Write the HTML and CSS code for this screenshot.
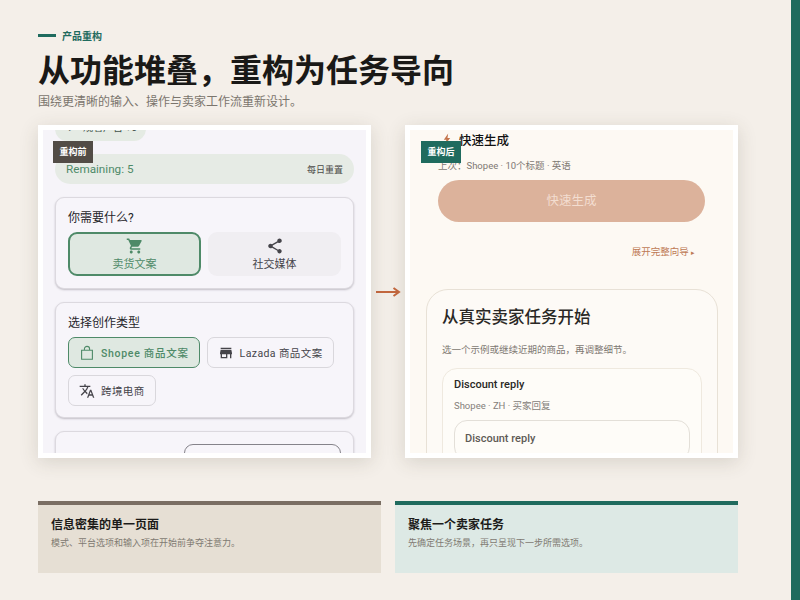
FILE: index.html
```html
<!DOCTYPE html>
<html lang="zh-CN">

<head>
    <meta charset="UTF-8">
    <meta name="viewport" content="width=device-width, initial-scale=1.0">
    <link rel="stylesheet" href="styles.css">
    <title>产品重构</title>
</head>

<body>
    <div class="page">
        <div class="main">
            <div class="eyebrow"><span class="eyebrow-line"></span><span>产品重构</span></div>
            <h1 class="title">从功能堆叠，重构为任务导向</h1>
            <p class="subtitle">围绕更清晰的输入、操作与卖家工作流重新设计。</p>

            <div class="compare">
                <div class="frame">
                    <div class="badge badge-before">重构前</div>
                    <div class="screen screen-before">
                        <div class="ad-chip"><span class="ad-play">▸</span><span>观看广告 +5</span></div>
                        <div class="remaining">
                            <span class="remaining-text">Remaining: 5</span>
                            <span class="remaining-note">每日重置</span>
                        </div>

                        <div class="card">
                            <div class="card-label">你需要什么?</div>
                            <div class="mode-row">
                                <div class="mode mode-on">
                                    <svg class="mode-icon" viewBox="0 0 24 24"><path d="M7 18c-1.1 0-1.99.9-1.99 2S5.9 22 7 22s2-.9 2-2-.9-2-2-2zM1 2v2h2l3.6 7.59-1.35 2.45c-.16.28-.25.61-.25.96 0 1.1.9 2 2 2h12v-2H7.42c-.14 0-.25-.11-.25-.25l.03-.12.9-1.63h7.45c.75 0 1.41-.41 1.75-1.03l3.58-6.49c.08-.14.12-.31.12-.48 0-.55-.45-1-1-1H5.21l-.94-2H1zm16 16c-1.1 0-1.99.9-1.99 2s.89 2 1.99 2 2-.9 2-2-.9-2-2-2z"/></svg>
                                    <span>卖货文案</span>
                                </div>
                                <div class="mode">
                                    <svg class="mode-icon" viewBox="0 0 24 24"><path d="M18 16.08c-.76 0-1.44.3-1.96.77L8.91 12.7c.05-.23.09-.46.09-.7s-.04-.47-.09-.7l7.05-4.11c.54.5 1.25.81 2.04.81 1.66 0 3-1.34 3-3s-1.34-3-3-3-3 1.34-3 3c0 .24.04.47.09.7L8.04 9.81C7.5 9.31 6.79 9 6 9c-1.66 0-3 1.34-3 3s1.34 3 3 3c.79 0 1.5-.31 2.04-.81l7.12 4.16c-.05.21-.08.43-.08.65 0 1.61 1.31 2.92 2.92 2.92 1.61 0 2.92-1.31 2.92-2.92s-1.31-2.92-2.92-2.92z"/></svg>
                                    <span>社交媒体</span>
                                </div>
                            </div>
                        </div>

                        <div class="card">
                            <div class="card-label">选择创作类型</div>
                            <div class="chip-row">
                                <div class="chip chip-on">
                                    <svg class="chip-icon bag" viewBox="0 0 16 16"><path d="M2.6 5.2h10.8v9H2.6zM5.4 5.2V4a2.6 2.6 0 0 1 5.2 0v1.2"/></svg>
                                    <span>Shopee 商品文案</span>
                                </div>
                                <div class="chip">
                                    <svg class="chip-icon" viewBox="0 0 24 24"><path d="M20 4H4v2h16V4zm1 10v-2l-1-5H4l-1 5v2h1v6h10v-6h4v6h2v-6h1zm-9 4H6v-4h6v4z"/></svg>
                                    <span>Lazada 商品文案</span>
                                </div>
                                <div class="chip">
                                    <svg class="chip-icon" viewBox="0 0 24 24"><path d="M12.87 15.07l-2.54-2.51.03-.03c1.74-1.94 2.98-4.17 3.71-6.53H17V4h-7V2H8v2H1v1.99h11.17C11.5 7.92 10.44 9.75 9 11.35 8.07 10.32 7.3 9.19 6.69 8h-2c.73 1.63 1.73 3.17 2.98 4.56l-5.09 5.02L4 19l5-5 3.11 3.11.76-2.04zM18.5 10h-2L12 22h2l1.12-3h4.75L21 22h2l-4.5-12zm-2.62 7l1.62-4.33L19.12 17h-3.24z"/></svg>
                                    <span>跨境电商</span>
                                </div>
                            </div>
                        </div>

                        <div class="card card-last">
                            <div class="select-box"></div>
                        </div>
                    </div>
                </div>

                <div class="arrow">
                    <svg viewBox="0 0 26 14" width="26" height="14"><path d="M1 7h23M18.500 3l5.500 4-5.500 4"/></svg>
                </div>

                <div class="frame">
                    <div class="badge badge-after">重构后</div>
                    <div class="screen screen-after">
                        <div class="quick-head">
                            <svg class="bolt" viewBox="0 0 10 14"><path d="M6.500 0L1 8h3.200L2.800 14 9 5.600H5.600z"/></svg>
                            <span>快速生成</span>
                        </div>
                        <div class="quick-meta">上次：Shopee · 10个标题 · 英语</div>
                        <div class="quick-btn">快速生成</div>
                        <div class="expand">展开完整向导 <span class="expand-mark">▸</span></div>

                        <div class="task-card">
                            <div class="task-title">从真实卖家任务开始</div>
                            <div class="task-sub">选一个示例或继续近期的商品，再调整细节。</div>
                            <div class="sample">
                                <div class="sample-name">Discount reply</div>
                                <div class="sample-meta">Shopee · ZH · 买家回复</div>
                                <div class="sample-input">Discount reply</div>
                            </div>
                        </div>
                    </div>
                </div>
            </div>

            <div class="notes">
                <div class="note note-before">
                    <div class="note-title">信息密集的单一页面</div>
                    <div class="note-text">模式、平台选项和输入项在开始前争夺注意力。</div>
                </div>
                <div class="note note-after">
                    <div class="note-title">聚焦一个卖家任务</div>
                    <div class="note-text">先确定任务场景，再只呈现下一步所需选项。</div>
                </div>
            </div>
        </div>
        <div class="stripe"></div>
    </div>
</body>

</html>
```

FILE: styles.css
```css
* {
    padding: 0;
    margin: 0;
    box-sizing: border-box;
}

body {
    background-color: #f4efe9;
    font-family: "Noto Sans CJK SC", sans-serif;
    color: #1c1b19;
}

.page {
    display: flex;
    justify-content: space-between;
    width: 800px;
    height: 600px;
    overflow: hidden;
}

.stripe {
    width: 9px;
    background-color: #1f6b5e;
}

.main {
    width: 700px;
    margin-left: 38px;
    padding-top: 27px;
}

/* header */
.eyebrow {
    display: flex;
    align-items: center;
    gap: 6px;
    height: 16px;
    font-size: 10px;
    font-weight: 700;
    color: #1f6b5e;
}

.eyebrow-line {
    width: 18px;
    height: 3px;
    background-color: #1f6b5e;
}

.title {
    margin-top: 3px;
    height: 44px;
    font-size: 32px;
    line-height: 44px;
    font-weight: 700;
    color: #1a1917;
}

.subtitle {
    margin-top: 2px;
    height: 18px;
    font-size: 12px;
    line-height: 18px;
    color: #7b756d;
}

/* before / after */
.compare {
    display: grid;
    grid-template-columns: 333px 34px 333px;
    margin-top: 15px;
}

.frame {
    position: relative;
    height: 333px;
    padding: 5px;
    background-color: #fff;
    box-shadow: 0 4px 18px rgba(70, 60, 45, .16);
}

.badge {
    position: absolute;
    top: 16px;
    left: 15px;
    z-index: 2;
    width: 40px;
    height: 22px;
    font-size: 9px;
    font-weight: 700;
    line-height: 22px;
    text-align: center;
    color: #fff;
}

.badge-before {
    background-color: #524c46;
}

.badge-after {
    left: 16px;
    background-color: #1f6b5e;
}

.screen {
    height: 323px;
    overflow: hidden;
}

.screen-before {
    padding: 0 12px;
    background-color: #f6f4f9;
    font-family: Roboto, "Noto Sans CJK SC", sans-serif;
}

.ad-chip {
    display: flex;
    gap: 9px;
    width: 91px;
    height: 24px;
    margin-top: -13px;
    padding: 4px 0 0 14px;
    border-radius: 0 0 12px 12px;
    background-color: #e5ebe4;
    font-size: 10px;
    line-height: 14px;
    color: #43524a;
}

.ad-play {
    font-size: 9px;
}

.remaining {
    display: flex;
    justify-content: space-between;
    align-items: center;
    height: 30px;
    margin-top: 13px;
    padding: 0 11px;
    border-radius: 15px;
    background-color: #e6ebe5;
}

.remaining-text {
    font-size: 11.7px;
    color: #4e8a68;
}

.remaining-note {
    font-size: 9px;
    color: #4b4a48;
}

.card {
    margin-top: 13px;
    padding: 11px 12px 0;
    border: 1px solid #dcd9df;
    border-radius: 9px;
    background-color: #f7f5fa;
    box-shadow: 0 1px 2px rgba(60, 55, 70, .28);
}

.card:nth-of-type(3) {
    height: 92px;
}

.card:nth-of-type(4) {
    height: 116px;
}

.card-label {
    height: 18px;
    font-size: 12px;
    line-height: 18px;
    color: #26252a;
}

.mode-row {
    display: grid;
    grid-template-columns: 133px 133px;
    gap: 7px;
    margin-top: 5px;
}

.mode {
    display: flex;
    flex-direction: column;
    align-items: center;
    justify-content: center;
    height: 44px;
    padding-top: 2px;
    border-radius: 9px;
    background-color: #f0eef2;
    font-size: 11px;
    line-height: 19px;
    color: #45444a;
    fill: #45444a;
}

.mode-on {
    border: 2px solid #4e8a68;
    background-color: #dfe8e1;
    color: #4e8a68;
    fill: #4e8a68;
}

.mode-icon {
    width: 18px;
    height: 18px;
}

.chip-row {
    display: flex;
    flex-wrap: wrap;
    gap: 7px;
    margin-top: 5px;
}

.chip {
    display: flex;
    align-items: center;
    gap: 6px;
    height: 31px;
    padding: 0 10px;
    border: 1px solid #d9d7dc;
    border-radius: 7px;
    font-size: 10.5px;
    letter-spacing: .4px;
    color: #45444a;
    fill: #45444a;
}

.chip-on {
    border-color: #4e8a68;
    background-color: #dfe8e1;
    font-weight: 500;
    letter-spacing: .7px;
    color: #4e8a68;
}

.chip-icon {
    width: 16px;
    height: 16px;
}

.bag {
    fill: none;
    stroke: #4e8a68;
    stroke-width: 1.1;
}

.card-last {
    height: 60px;
    padding-top: 12px;
}

.select-box {
    width: 157px;
    height: 40px;
    margin-left: 116px;
    border: 1px solid #85838a;
    border-radius: 9px;
}

.arrow {
    display: flex;
    justify-content: center;
    align-items: center;
    fill: none;
    stroke: #c4683f;
    stroke-width: 2;
}

.screen-after {
    padding: 0 28px;
    background-color: #fdf9f3;
    font-family: Roboto, "Noto Sans CJK SC", sans-serif;
}

.quick-head {
    display: flex;
    align-items: center;
    gap: 8px;
    height: 18px;
    padding-left: 5px;
    font-size: 12.5px;
    font-weight: 500;
    color: #111;
}

.bolt {
    width: 8px;
    height: 12px;
    fill: #c4744c;
}

.quick-meta {
    margin-top: 11px;
    font-size: 9.5px;
    line-height: 14px;
    color: #7d7872;
}

.quick-btn {
    height: 42px;
    margin-top: 7px;
    border-radius: 21px;
    background-color: #dcb29b;
    font-size: 12.5px;
    line-height: 42px;
    text-align: center;
    color: #f3ddd0;
}

.expand {
    height: 16px;
    margin-top: 22px;
    padding-right: 10px;
    font-size: 9.5px;
    line-height: 16px;
    text-align: right;
    color: #bd7a56;
}

.expand-mark {
    font-size: 7px;
}

.task-card {
    width: 292px;
    height: 200px;
    margin: 29px 0 0 -12px;
    padding: 16px 15px 0;
    border: 1px solid #e8e1d6;
    border-radius: 22px;
    background-color: #fdfaf6;
}

.task-title {
    height: 24px;
    font-size: 16.5px;
    line-height: 24px;
    font-weight: 500;
    color: #2a2825;
}

.task-sub {
    margin-top: 13px;
    font-size: 9.5px;
    line-height: 14px;
    color: #7d7872;
}

.sample {
    height: 120px;
    margin-top: 11px;
    padding: 9px 11px 0;
    border: 1px solid #efe9df;
    border-radius: 15px;
    background-color: #fefcf8;
}

.sample-name {
    font-size: 11px;
    line-height: 14px;
    font-weight: 500;
    color: #2a2825;
}

.sample-meta {
    margin-top: 7px;
    font-size: 9.5px;
    line-height: 14px;
    color: #85807a;
}

.sample-input {
    height: 40px;
    margin-top: 7px;
    padding: 11px 10px 0;
    border: 1px solid #e3dfd8;
    border-radius: 13px;
    font-size: 11px;
    line-height: 14px;
    font-weight: 500;
    color: #5e5a55;
}

/* bottom notes */
.notes {
    display: grid;
    grid-template-columns: 343px 343px;
    gap: 14px;
    margin-top: 43px;
}

.note {
    height: 72px;
    padding: 11px 13px 0;
    border-top: 4px solid;
}

.note-before {
    border-color: #7a6e63;
    background-color: #e6dfd4;
}

.note-after {
    border-color: #1f6b5e;
    background-color: #dde9e5;
}

.note-title {
    font-size: 12px;
    line-height: 16px;
    font-weight: 700;
    color: #1c1b19;
}

.note-text {
    margin-top: 4px;
    font-size: 9px;
    line-height: 14px;
    color: #7f7a72;
}
```
